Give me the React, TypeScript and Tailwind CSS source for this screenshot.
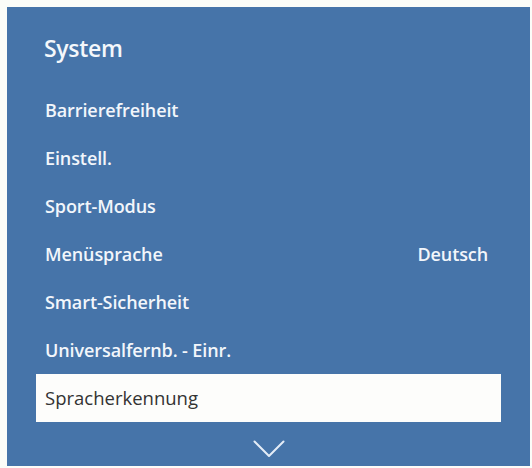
const items: { label: string; value?: string }[] = [
  { label: 'Barrierefreiheit' },
  { label: 'Einstell.' },
  { label: 'Sport-Modus' },
  { label: 'Menüsprache', value: 'Deutsch' },
  { label: 'Smart-Sicherheit' },
  { label: 'Universalfernb. - Einr.' },
  { label: 'Spracherkennung' },
];

const selected = 6;

export default function App() {
  return (
    <div className="w-[532px] h-[468px] bg-[#fbfcf8] pt-[7px] pl-[7px] font-['Open_Sans',sans-serif]">
      <div className="w-[523px] h-[459px] bg-[#4674a9] flex flex-col">
        <div className="h-[79px] flex items-center pl-[37px] pt-[3px]">
          <h1 className="text-[23px] font-semibold text-[#f4f7fb] tracking-[-0.3px]">System</h1>
        </div>
        <ul className="px-[29px]">
          {items.map((it, i) => (
            <li
              key={it.label}
              className={
                i === selected
                  ? 'h-[48px] flex items-center justify-between pl-[9px] pr-[13px] bg-[#fdfdfb] text-[#333333] text-[18.5px] font-medium'
                  : 'h-[48px] flex items-center justify-between pl-[9px] pr-[13px] text-[#f2f6fb] text-[18px] font-semibold tracking-[-0.1px]'
              }
            >
              <span>{it.label}</span>
              {it.value && <span>{it.value}</span>}
            </li>
          ))}
        </ul>
        <div className="flex justify-center pt-[18px]">
          <svg width="32" height="18" viewBox="0 0 32 18" fill="none">
            <path d="M1.5 1.5 L16 16 L30.5 1.5" stroke="#e4ecf6" strokeWidth="2" strokeLinecap="round" strokeLinejoin="round" />
          </svg>
        </div>
      </div>
    </div>
  );
}
